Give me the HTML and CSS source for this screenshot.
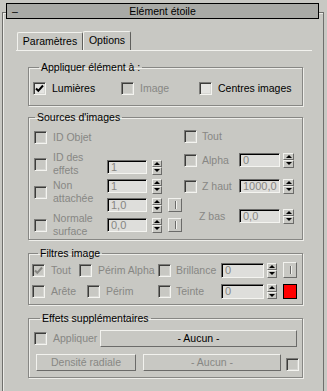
FILE: index.html
```html
<!DOCTYPE html>
<html lang="fr">
<head>
    <meta charset="UTF-8">
    <title>Elément étoile</title>
    <link rel="stylesheet" href="styles.css">
</head>
<body>
    <div class="rollout">
        <div class="rollout-head">
            <span class="minus">–</span>
            <span class="head-title">Elément étoile</span>
        </div>

        <div class="tabs">
            <div class="tab">Paramètres</div>
            <div class="tab tab-on">Options</div>
        </div>

        <fieldset class="grp grp-apply">
            <legend>Appliquer élément à :</legend>
            <div class="row">
                <div class="chk w88"><span class="cb cb-on"><svg width="9" height="9" viewBox="0 0 9 9"><path d="M1 4.5l2.3 2.3L8 1.5" stroke="#000" stroke-width="2" fill="none"/></svg></span>Lumières</div>
                <div class="chk w78 dis"><span class="cb"></span>Image</div>
                <div class="chk"><span class="cb cb-on"></span>Centres images</div>
            </div>
        </fieldset>

        <fieldset class="grp grp-src">
            <legend>Sources d'images</legend>
            <div class="src">
                <div class="src-labels dis">
                    <div class="chk m7"><span class="cb"></span>ID Objet</div>
                    <div class="chk tall m7"><span class="cb"></span><span>ID des<br>effets</span></div>
                    <div class="chk tall m2"><span class="cb"></span><span>Non<br>attachée</span></div>
                    <div class="chk tall m7"><span class="cb"></span><span>Normale<br>surface</span></div>
                </div>
                <div class="src-fields">
                    <div class="frow m36"><span class="fld">1</span><span class="spin"><i></i><i></i></span></div>
                    <div class="frow m5"><span class="fld">1</span><span class="spin"><i></i><i></i></span></div>
                    <div class="frow m5"><span class="fld">1,0</span><span class="spin"><i></i><i></i></span><span class="pick"></span></div>
                    <div class="frow m6"><span class="fld">0,0</span><span class="spin"><i></i><i></i></span><span class="pick"></span></div>
                </div>
                <div class="src-right dis">
                    <div class="chk gap5 m6"><span class="cb"></span>Tout</div>
                    <div class="frow r15 m10"><div class="chk gap5 w55"><span class="cb"></span>Alpha</div><span class="fld fld41">0</span><span class="spin spin-r"><i></i><i></i></span></div>
                    <div class="frow r15 m12"><div class="chk gap5 w55"><span class="cb"></span>Z haut</div><span class="fld fld41">1000,0</span><span class="spin spin-r"><i></i><i></i></span></div>
                    <div class="frow r15 m16"><span class="zbas">Z bas</span><span class="fld fld41">0,0</span><span class="spin spin-r"><i></i><i></i></span></div>
                </div>
            </div>
        </fieldset>

        <fieldset class="grp grp-filt">
            <legend>Filtres image</legend>
            <div class="row r16 dis">
                <div class="chk w47"><span class="cb"><svg width="9" height="9" viewBox="0 0 9 9"><path d="M1 4.5l2.3 2.3L8 1.5" stroke="#878783" stroke-width="2" fill="none"/></svg></span>Tout</div>
                <div class="chk w79"><span class="cb"></span>Périm Alpha</div>
                <div class="chk gap5 w63"><span class="cb"></span>Brillance</div>
                <span class="fld fld43">0</span>
                <span class="spin spin-f"><i></i><i></i></span>
                <span class="pick pick-f"></span>
            </div>
            <div class="row r15 m6 dis">
                <div class="chk w55"><span class="cb"></span>Arête</div>
                <div class="chk w71"><span class="cb"></span>Périm</div>
                <div class="chk gap5 w63"><span class="cb"></span>Teinte</div>
                <span class="fld fld43">0</span>
                <span class="spin spin-f"><i></i><i></i></span>
                <span class="swatch"></span>
            </div>
        </fieldset>

        <fieldset class="grp grp-fx">
            <legend>Effets supplémentaires</legend>
            <div class="row">
                <div class="chk w66 dis"><span class="cb"></span>Appliquer</div>
                <div class="btn btn-aucun">- Aucun -</div>
            </div>
            <div class="row m6">
                <div class="btn btn-radial dis">Densité radiale</div>
                <div class="btn btn-aucun2 dis">- Aucun -</div>
                <span class="cb cb-end"></span>
            </div>
        </fieldset>
    </div>
</body>
</html>
```
FILE: styles.css
```css
body {
    margin: 0;
    width: 327px;
    height: 391px;
    overflow: hidden;
    background-color: #c8c8c3;
    font-family: "Liberation Sans", Arial, sans-serif;
    font-size: 10.5px;
    color: #000;
}

.rollout {
    margin: 12px 3px 0 2px;
    height: 378px;
    border: 1px solid #6f6f6c;
    border-bottom: 0;
    box-shadow: inset 1px 1px 0 #ececE8;
}

.rollout-head {
    display: grid;
    grid-template-columns: 1fr auto 1fr;
    align-items: center;
    height: 14px;
    margin: -10px 4px 0 3px;
    border: 1px solid #000;
    background-color: #a9aaa6;
    line-height: 14px;
}

.minus {
    padding-left: 5px;
}

/* tabs */
.tabs {
    display: flex;
    align-items: flex-end;
    height: 19px;
    margin: 12px 11px 0 13px;
    padding-left: 1px;
    border-bottom: 1px solid #f2f2ee;
}

.tab {
    width: 66px;
    height: 18px;
    box-sizing: border-box;
    border: 1px solid;
    border-bottom: 0;
    border-color: #f2f2ee #5f5f5c #5f5f5c #f2f2ee;
    border-radius: 2px 2px 0 0;
    text-align: center;
    line-height: 16px;
}

.tab-on {
    width: 48px;
    height: 19px;
}

/* groups */
.grp {
    width: 275px;
    box-sizing: border-box;
    margin: 0 0 0 25px;
    padding: 0;
    min-width: 0;
    border: 1px solid #878784;
    box-shadow: inset 1px 1px 0 #eeeeea, 1px 1px 0 #eeeeea;
}

.grp legend {
    margin-left: 6px;
    padding: 0 2px;
    line-height: 13px;
}

.grp-apply {
    margin-top: 10px;
    padding: 8px 0 10px 4px;
}

.grp-src {
    margin-top: 5px;
}

.grp-filt {
    margin-top: 7px;
    padding: 2px 0 5px 3px;
}

.grp-fx {
    margin-top: 7px;
    padding: 5px 0 6px 5px;
}

.row {
    display: flex;
    align-items: center;
}

.r15 { height: 15px; }
.r16 { height: 16px; }

.m2 { margin-top: 2px; }
.m5 { margin-top: 5px; }
.m6 { margin-top: 6px; }
.m7 { margin-top: 7px; }
.m10 { margin-top: 10px; }
.m12 { margin-top: 12px; }
.m16 { margin-top: 16px; }
.m36 { margin-top: 36px; }

.w47 { width: 47px; }
.w55 { width: 55px; }
.w63 { width: 63px; }
.w66 { width: 66px; }
.w71 { width: 71px; }
.w78 { width: 78px; }
.w79 { width: 79px; }
.w88 { width: 88px; }

.dis {
    color: #878783;
}

/* checkbox */
.chk {
    display: flex;
    align-items: center;
    gap: 6px;
    height: 13px;
    line-height: 13px;
    white-space: nowrap;
    flex-shrink: 0;
}

.chk.gap5 {
    gap: 5px;
}

.chk.tall {
    height: 26px;
}

.cb {
    display: flex;
    align-items: center;
    justify-content: center;
    width: 13px;
    height: 13px;
    box-sizing: border-box;
    flex-shrink: 0;
    border: 1px solid;
    border-color: #7c7c79 #f4f4f0 #f4f4f0 #7c7c79;
    box-shadow: inset 1px 1px 0 #3c3c3a, inset -1px -1px 0 #d6d6d2;
    background-color: #c8c8c3;
}

.cb-on {
    background-color: #e4e4e1;
}

/* sources d'images */
.src {
    display: flex;
    height: 115px;
}

.src-labels {
    width: 78px;
    box-sizing: border-box;
    padding-left: 5px;
    display: flex;
    flex-direction: column;
}

.src-fields {
    width: 77px;
    display: flex;
    flex-direction: column;
}

.src-right {
    flex: 1;
    display: flex;
    flex-direction: column;
}

.frow {
    display: flex;
    align-items: center;
    height: 14px;
}

.zbas {
    width: 40px;
    padding-left: 15px;
}

/* fields and spinners */
.fld {
    width: 40px;
    height: 14px;
    box-sizing: border-box;
    flex-shrink: 0;
    border: 1px solid;
    border-color: #6b6b69 #f4f4f0 #f4f4f0 #6b6b69;
    box-shadow: inset 1px 1px 0 #000;
    background-color: #dededb;
    color: #878783;
    padding-left: 3px;
    line-height: 12px;
    font-size: 11px;
}

.fld41 { width: 41px; }
.fld43 { width: 43px; height: 15px; line-height: 13px; }

.spin {
    display: flex;
    flex-direction: column;
    width: 10px;
    height: 15px;
    margin-left: 5px;
    flex-shrink: 0;
}

.spin-r {
    width: 11px;
    margin-left: 3px;
}

.spin-f {
    margin-left: 3px;
}

.spin i {
    flex: 1;
    display: flex;
    align-items: center;
    justify-content: center;
    border: 1px solid;
    border-color: #f2f2ee #6b6b69 #6b6b69 #f2f2ee;
}

.spin i::after {
    content: "";
    border: solid transparent;
    border-width: 0 3px 3px;
    border-bottom-color: #000;
}

.spin i + i::after {
    border-width: 3px 3px 0;
    border-top-color: #000;
    border-bottom-color: transparent;
}

.pick {
    display: flex;
    align-items: center;
    justify-content: center;
    width: 14px;
    height: 14px;
    box-sizing: border-box;
    margin-left: 6px;
    border: 1px solid;
    border-color: #f2f2ee #6b6b69 #6b6b69 #f2f2ee;
}

.pick::after {
    content: "";
    width: 1px;
    height: 8px;
    background-color: #6b6b69;
    box-shadow: 1px 0 0 #f2f2ee;
}

.pick-f {
    height: 16px;
}

.swatch {
    width: 14px;
    height: 15px;
    box-sizing: border-box;
    margin-left: 6px;
    border: 1px solid #000;
    background-color: #f00;
}

/* buttons */
.btn {
    height: 17px;
    box-sizing: border-box;
    border: 1px solid;
    border-color: #f2f2ee #6b6b69 #6b6b69 #f2f2ee;
    text-align: center;
    line-height: 15px;
    white-space: nowrap;
}

.btn-aucun {
    width: 197px;
}

.btn-radial {
    width: 100px;
    margin-left: 2px;
}

.btn-aucun2 {
    width: 138px;
    margin-left: 7px;
}

.cb-end {
    margin: 5px 0 0 5px;
}
```
